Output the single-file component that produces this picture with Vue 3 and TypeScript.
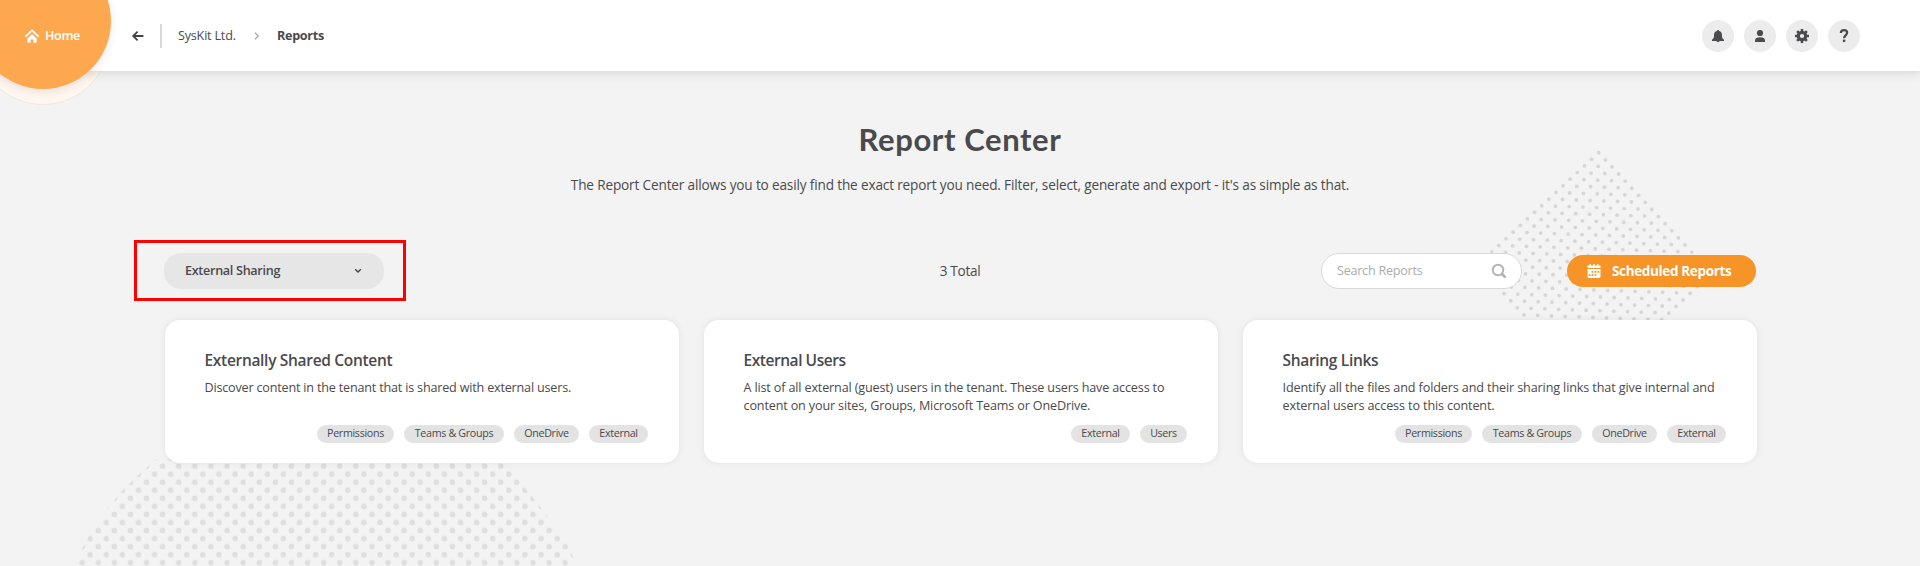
<script setup lang="ts">
interface Tag { label: string; width: number }
interface Report { title: string; lines: string[]; tags: Tag[] }
interface Dot { x: number; y: number }

const permissions: Tag = { label: 'Permissions', width: 77 }
const teams: Tag = { label: 'Teams & Groups', width: 100 }
const oneDrive: Tag = { label: 'OneDrive', width: 65 }
const external: Tag = { label: 'External', width: 59 }
const users: Tag = { label: 'Users', width: 47 }

const reports: Report[] = [
  {
    title: 'Externally Shared Content',
    lines: ['Discover content in the tenant that is shared with external users.'],
    tags: [permissions, teams, oneDrive, external],
  },
  {
    title: 'External Users',
    lines: [
      'A list of all external (guest) users in the tenant. These users have access to',
      'content on your sites, Groups, Microsoft Teams or OneDrive.',
    ],
    tags: [external, users],
  },
  {
    title: 'Sharing Links',
    lines: [
      'Identify all the files and folders and their sharing links that give internal and',
      'external users access to this content.',
    ],
    tags: [permissions, teams, oneDrive, external],
  },
]

// 18 x 18 rotated grid behind the toolbar
const diamond: Dot[] = []
for (let i = 0; i < 18; i++) {
  for (let j = 0; j < 18; j++) {
    diamond.push({ x: 128.7 - 7.13 * i + 6.64 * j, y: 4.7 + 6.62 * i + 7.1 * j })
  }
}
</script>

<template>
  <div class="page">
    <svg class="dots-small" width="260" height="250">
      <circle v-for="(d, i) in diamond" :key="i" :cx="d.x" :cy="d.y" r="1.9" fill="#d6d6d6" />
    </svg>
    <svg class="dots-big" width="520" height="110">
      <defs>
        <pattern id="stagger" x="94.6" y="2.2" width="16.1" height="16.08" patternUnits="userSpaceOnUse">
          <circle cx="8.05" cy="8.04" r="2.75" fill="#dedede" />
          <circle cx="0" cy="0" r="2.75" fill="#dedede" />
          <circle cx="16.1" cy="0" r="2.75" fill="#dedede" />
          <circle cx="0" cy="16.08" r="2.75" fill="#dedede" />
          <circle cx="16.1" cy="16.08" r="2.75" fill="#dedede" />
        </pattern>
      </defs>
      <path d="M97 3L77 20L61 36L48 52L34 70L23 91L14 110H518L512 99L506 86L488 61L474 43L460 26L439 3Z" fill="url(#stagger)" />
    </svg>

    <div class="home-ring"></div>
    <header class="topbar">
      <nav class="crumbs">
        <svg class="back" width="14" height="12" viewBox="0 0 14 12" fill="none" stroke="#444" stroke-width="1.8">
          <path d="M12.4 6H2.4M6.6 1.6L2.2 6L6.6 10.4" />
        </svg>
        <span class="divider"></span>
        <span class="crumb">SysKit Ltd.</span>
        <svg class="sep" width="6" height="8" viewBox="0 0 6 8" fill="none" stroke="#aaa" stroke-width="1.4">
          <path d="M1 .8L4.3 4L1 7.2" />
        </svg>
        <span class="crumb current">Reports</span>
      </nav>
      <div class="actions">
        <button class="round">
          <svg width="32" height="32" viewBox="0 0 32 32" fill="#4b4b4d">
            <path d="M16 10C16.8 10 17 10.5 17 11C19.3 11.5 20 13.2 20 15.5C20 17.8 20.4 18.7 22 19.6V21H10V19.6C11.6 18.7 12 17.8 12 15.5C12 13.2 12.7 11.5 15 11C15 10.5 15.2 10 16 10ZM14.5 21H17.5C17.4 21.8 16.8 22 16 22S14.6 21.8 14.5 21Z" />
          </svg>
        </button>
        <button class="round">
          <svg width="32" height="32" viewBox="0 0 32 32" fill="#4b4b4d">
            <circle cx="16" cy="13" r="3.1" />
            <path d="M11 22V20.6C11 18.4 13 17.3 16 17.3S21 18.4 21 20.6V22Z" />
          </svg>
        </button>
        <button class="round">
          <svg width="32" height="32" viewBox="0 0 32 32" fill="none" stroke="#4b4b4d">
            <circle cx="16" cy="16" r="3.7" stroke-width="3.2" />
            <path d="M16 9V12M16 20V23M9 16H12M20 16H23M11.1 11.1L13 13M19 19L20.9 20.9M11.1 20.9L13 19M19 13L20.9 11.1" stroke-width="2.5" />
          </svg>
        </button>
        <button class="round">
          <svg width="32" height="32" viewBox="0 0 32 32" fill="none" stroke="#4b4b4d" stroke-width="2.3">
            <path d="M12.9 12.9C12.9 11 14.2 10.1 16 10.1C17.9 10.1 19.1 11.2 19.1 12.7C19.1 15 16.1 15.2 16.1 18.2" />
            <path d="M14.9 20.8H17.3" stroke-width="2.4" />
          </svg>
        </button>
      </div>
    </header>
    <a class="home">
      <svg width="14" height="14" viewBox="0 0 14 14">
        <path d="M1 7.2L7 1.3L13 7.2" fill="none" stroke="#fff" stroke-width="1.8" stroke-linecap="round" stroke-linejoin="round" />
        <path d="M2.3 9.6L7 5L11.7 9.6V12.6Q11.7 13.8 10.6 13.8H8.4V10.6H5.6V13.8H3.4Q2.3 13.8 2.3 12.6Z" fill="#fff" />
      </svg>
      <span>Home</span>
    </a>

    <main class="content">
      <h1>Report Center</h1>
      <p class="lead">The Report Center allows you to easily find the exact report you need. Filter, select, generate and export - it's as simple as that.</p>

      <div class="toolbar">
        <div class="filter">
          <span>External Sharing</span>
          <svg width="8" height="6" viewBox="0 0 8 6" fill="none" stroke="#444" stroke-width="1.4">
            <path d="M1.2 1.2L4 4L6.8 1.2" />
          </svg>
          <div class="highlight"></div>
        </div>
        <div class="total">3 Total</div>
        <div class="right">
          <div class="search">
            <span>Search Reports</span>
            <svg width="16" height="16" viewBox="0 0 16 16" fill="none" stroke="#b3b3b3">
              <circle cx="7" cy="7" r="5.3" stroke-width="1.9" />
              <path d="M11.2 11.2L13.8 13.8" stroke-width="2.7" stroke-linecap="round" />
            </svg>
          </div>
          <button class="scheduled">
            <svg width="14" height="14" viewBox="0 0 14 14">
              <path d="M.5 1.5H2.6V0H4V1.5H6.3V0H7.7V1.5H10V0H11.4V1.5H13.5V4H.5ZM.5 5H13.5V12.6Q13.5 14 12.1 14H1.9Q.5 14 .5 12.6Z" fill="#fff" />
              <path d="M4.6 7H6.4V8.8H4.6ZM7.6 7H9.4V8.8H7.6ZM10.5 7H12.3V8.8H10.5ZM1.7 10.2H3.5V12H1.7ZM4.6 10.2H6.4V12H4.6ZM7.6 10.2H9.4V12H7.6Z" fill="#f79428" />
            </svg>
            <span>Scheduled Reports</span>
          </button>
        </div>
      </div>

      <section class="cards">
        <article v-for="r in reports" :key="r.title" class="card">
          <h2>{{ r.title }}</h2>
          <p class="desc"><span v-for="l in r.lines" :key="l">{{ l }}</span></p>
          <div class="tags">
            <span v-for="t in r.tags" :key="t.label" class="tag" :style="{ width: t.width + 'px' }">{{ t.label }}</span>
          </div>
        </article>
      </section>
    </main>
  </div>
</template>

<style>
body { margin: 0; background: #f3f3f3; }
</style>

<style scoped>
.page {
  position: relative;
  height: 566px;
  overflow: hidden;
  background: #f3f3f3;
  color: #4a4a4c;
  font-family: "Open Sans", "Noto Sans", sans-serif;
  font-size: 12.6px;
}
svg { display: block; flex: none; }
button { border: 0; padding: 0; font: inherit; color: inherit; }
.dots-small { position: absolute; left: 1470px; top: 148px; }
.dots-big { position: absolute; left: 60px; top: 456px; }

.home-ring {
  position: absolute;
  left: -24px;
  top: -29px;
  width: 132px;
  height: 132px;
  border-radius: 50%;
  background: #fff7ef;
  border: 1px solid #efe8e0;
}
.topbar {
  position: relative;
  height: 71px;
  display: flex;
  justify-content: space-between;
  box-sizing: border-box;
  padding: 0 60px 12px 131px;
  align-items: center;
  background: #fff;
  box-shadow: 0 2px 10px rgba(0, 0, 0, .12);
}
.home {
  position: absolute;
  left: -25px;
  top: -47px;
  width: 136px;
  height: 136px;
  box-sizing: border-box;
  padding: 76px 0 0 50px;
  display: flex;
  gap: 6px;
  border-radius: 50%;
  background: #fda84f;
  box-shadow: 0 3px 8px rgba(0, 0, 0, .09);
  color: #fff;
  font-weight: 600;
  letter-spacing: -.35px;
  line-height: 14px;
}
.crumbs { display: flex; align-items: center; padding-top: 13px; }
.divider { width: 2px; height: 24px; margin: 0 16px 0 15px; background: #d8d8d8; }
.crumb { letter-spacing: -.2px; width: 58px; line-height: 17px; padding-bottom: 1px; white-space: nowrap; }
.sep { margin: 0 17px 0 18px; }
.current { font-weight: 700; letter-spacing: -.3px; }
.actions { display: flex; gap: 10px; padding-top: 13px; }
.round { width: 32px; height: 32px; border-radius: 50%; background: #ececec; }

.content { position: relative; margin: 0 164px; }
h1 {
  margin: 0;
  padding-top: 48px;
  font: 700 31px/40px Lato, sans-serif;
  letter-spacing: .6px;
  text-align: center;
}
.lead { margin: 16px 0 0; font-size: 13.6px; line-height: 20px; letter-spacing: -.153px; text-align: center; }
.toolbar {
  display: grid;
  grid-template-columns: 1fr auto 1fr;
  align-items: center;
  height: 36px;
  margin-top: 58px;
}
.filter {
  position: relative;
  display: flex;
  align-items: center;
  justify-content: space-between;
  box-sizing: border-box;
  width: 220px;
  height: 36px;
  padding: 0 22px 1px 21px;
  border-radius: 17px;
  background: #e6e6e6;
  font-weight: 600;
  letter-spacing: -.3px;
}
.highlight { position: absolute; left: -30px; top: -13px; width: 266px; height: 55px; border: 3px solid #fe0000; }
.total { padding-bottom: 2px; font-size: 13.6px; letter-spacing: -.3px; }
.right { display: flex; justify-content: flex-end; align-items: center; gap: 45px; }
.search {
  display: flex;
  align-items: center;
  justify-content: space-between;
  box-sizing: border-box;
  width: 201px;
  height: 36px;
  padding: 0 14px 1px 15px;
  border: 1px solid #dadada;
  border-radius: 18px;
  background: #fff;
  color: #acacac;
  letter-spacing: -.25px;
}
.scheduled {
  display: flex;
  align-items: center;
  gap: 11px;
  width: 189px;
  height: 32px;
  padding: 0 0 1px 20px;
  border-radius: 16px;
  background: #f79428;
  color: #fff;
  font-size: 13.5px;
  font-weight: 700;
  letter-spacing: -.35px;
  white-space: nowrap;
}
.cards { display: grid; grid-template-columns: repeat(3, 1fr); gap: 25px; margin: 31px -.5px 0 .5px; }
.card {
  display: flex;
  flex-direction: column;
  box-sizing: border-box;
  height: 143px;
  padding: 29px 30.5px 20px 40px;
  border-radius: 15px;
  background: #fff;
  box-shadow: 0 0 7px rgba(0, 0, 0, .08);
}
h2 { margin: 0; font-size: 15.5px; font-weight: 600; line-height: 22px; letter-spacing: -.31px; }
.card:nth-child(2) h2 { letter-spacing: -.45px; }
.desc { display: flex; flex-direction: column; margin: 8px 0 0; line-height: 18px; letter-spacing: -.19px; white-space: nowrap; }
.card:nth-child(2) .desc { letter-spacing: -.15px; }
.card:nth-child(3) .desc { letter-spacing: -.12px; }
.tags { display: flex; justify-content: flex-end; gap: 10px; margin-top: auto; }
.tag {
  height: 18px;
  border-radius: 9px;
  background: #e3e3e3;
  font-size: 10.7px;
  line-height: 17px;
  letter-spacing: -.32px;
  text-align: center;
  white-space: nowrap;
}
</style>
